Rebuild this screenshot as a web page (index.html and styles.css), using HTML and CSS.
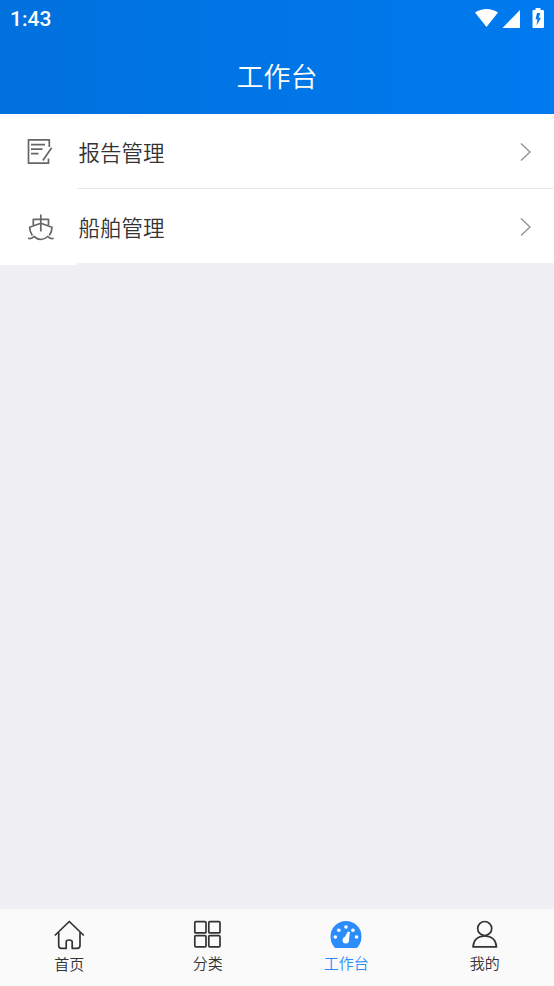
FILE: index.html
```html
<!DOCTYPE html>
<html lang="zh-CN">
<head>
<meta charset="utf-8">
<title>工作台</title>
<link rel="stylesheet" href="styles.css">
</head>
<body>
<header class="header">
  <div class="status">
    <span class="time">1:43</span>
    <svg class="status-icons" width="72" height="24" viewBox="474 6 72 24" fill="#fff">
      <path d="M475 12.6C481.500 7.700 491.500 7.700 498 12.600L486.500 27Z"/>
      <path d="M520 10V28H502.500Z"/>
      <path fill-rule="evenodd" d="M535.500 8H540.500V10H543Q544 10 544 11V27Q544 28 543 28H533.500Q532.500 28 532.500 27V11Q532.500 10 533.500 10H535.500ZM537 13L535.500 19.300H537.500L536.500 25.500L541 17.700H538.700L540.300 13Z"/>
    </svg>
  </div>
  <h1 class="title">工作台</h1>
</header>
<main class="list">
  <a class="row">
    <svg class="row-icon" width="30" height="30" viewBox="26 136 30 30">
      <path d="M49.300 147V139.800H28.500V163.200H48.500V158.500M31 144.700H45M31 149.200H42.500M31 153.700H38.500M51.700 147.800L42.800 160.500"/>
    </svg>
    <span class="row-body"><span class="label">报告管理</span>
      <svg class="chevron" width="14" height="20" viewBox="0 0 14 20"><path d="M2 1.500L11 10L2 18.500"/></svg></span>
  </a>
  <a class="row last">
    <svg class="row-icon" width="30" height="30" viewBox="26 212 30 30">
      <path d="M40.800 214.500V231.500M33.300 225V219.300H48.500V225M32.300 235.500Q29.500 231 29.600 227.300L40.800 223.300L52 227.300Q52 232 49.300 235.500M28 238.300Q31.500 239.300 34 236.500Q37.500 239.500 41 239.500Q44.500 239.500 47.700 236.500Q50 239.300 53.700 238.300"/>
    </svg>
    <span class="row-body"><span class="label">船舶管理</span>
      <svg class="chevron" width="14" height="20" viewBox="0 0 14 20"><path d="M2 1.500L11 10L2 18.500"/></svg></span>
  </a>
</main>
<nav class="tabs">
  <a class="tab home">
    <svg width="34" height="32" viewBox="52 918 34 32"><path d="M54.800 935.500L69.300 921.500L83.800 935.500M58.700 932.500V945.500Q58.700 948.300 61.500 948.300H66.200V942Q66.200 940 69.200 940Q72.200 940 72.200 942V948.300H77Q80 948.300 80 945.500V932.500"/></svg>
    <span>首页</span>
  </a>
  <a class="tab">
    <svg width="34" height="32" viewBox="191 918 34 32"><rect x="194.800" y="921.700" width="11.200" height="11.200" rx="1"/><rect x="208.800" y="921.700" width="11.200" height="11.200" rx="1"/><rect x="194.800" y="935.600" width="11.200" height="11.200" rx="1"/><rect x="208.800" y="935.600" width="11.200" height="11.200" rx="1"/></svg>
    <span>分类</span>
  </a>
  <a class="tab active">
    <svg width="34" height="32" viewBox="329.500 918 34 32"><path class="dial" d="M335.500 948Q331 943 331 936.500A15.500 15.500 0 0 1 362 936.500Q362 943 357.500 948Z"/><g class="marks"><circle cx="335.800" cy="937" r="1.800"/><circle cx="339.300" cy="930.300" r="1.800"/><circle cx="346.500" cy="927" r="1.800"/><circle cx="353.400" cy="930.300" r="1.800"/><circle cx="357" cy="937" r="1.800"/><circle cx="346.300" cy="940.300" r="3.200"/><path d="M348.300 931.500L350.500 932L349.200 941L344.500 938.500Z"/></g></svg>
    <span>工作台</span>
  </a>
  <a class="tab">
    <svg width="34" height="32" viewBox="468 918 34 32"><circle cx="484.700" cy="928.500" r="7"/><path d="M473 946.800Q474 936 484.800 936Q495.500 936 496.500 946.800Z"/></svg>
    <span>我的</span>
  </a>
</nav>
</body>
</html>
```
FILE: styles.css
```css
* { box-sizing: border-box; }
body {
  margin: 0;
  height: 986px;
  display: flex;
  flex-direction: column;
  background: #efeff4;
  color: #333;
  font-family: "Noto Sans CJK SC", sans-serif;
  font-weight: 350;
}
svg { display: block; fill: none; stroke-linejoin: round; }
.header {
  height: 114px;
  background: linear-gradient(90deg, #0171de, #007aef);
  color: #fff;
}
.status {
  height: 38px;
  display: flex;
  justify-content: space-between;
  padding: 6px 8px 0 10px;
}
.time { font: 500 21px/27px Roboto, sans-serif; }
.status-icons { fill: #fff; }
.title {
  margin: 0;
  font-size: 27px;
  font-weight: 350;
  line-height: 75px;
  text-align: center;
}
.list { flex: 1; }
.row {
  display: flex;
  height: 75px;
  padding-left: 26px;
  background: #fff;
}
.last { height: 76px; }
.row-icon { margin-top: 22px; stroke: #666; stroke-width: 1.700; }
.last .row-icon { margin-top: 23px; }
.row-body {
  flex: 1;
  display: flex;
  align-items: center;
  justify-content: space-between;
  height: 75px;
  margin-left: 21px;
  padding: 1px 21px 0 1.500px;
  border-bottom: 1px solid #e9e9ec;
}
.last .row-body {
  height: 76px;
  padding-top: 2px;
  border-bottom: 2px solid #efeff4;
}
.label { font-size: 21.500px; line-height: 32px; }
.chevron { stroke: #999; stroke-width: 1.600; }
.tabs {
  display: flex;
  height: 77px;
  padding-top: 9px;
  background: #fafafa;
}
.tab {
  flex: 1;
  display: flex;
  flex-direction: column;
  align-items: center;
  font-size: 15px;
  line-height: 24px;
}
.tab svg { stroke: #333; stroke-width: 1.700; }
.tab span { margin-top: 1px; }
.home span { margin-top: 2px; }
.active { color: #2c8dfa; }
.active .dial { fill: #2c8dfa; stroke: none; }
.active .marks { fill: #fff; stroke: none; }
```
